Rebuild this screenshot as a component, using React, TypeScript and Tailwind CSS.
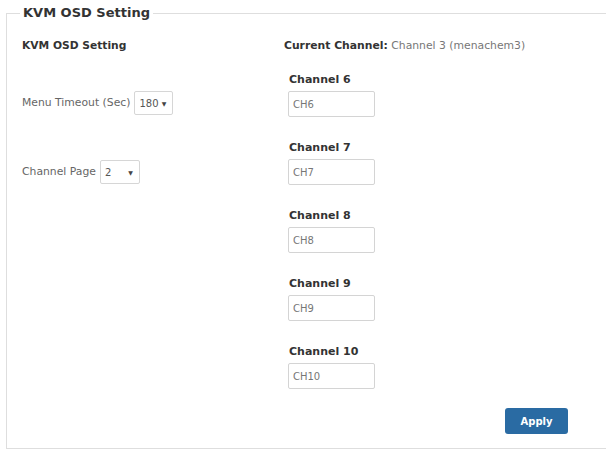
const channels = [
  { label: 'Channel 6', value: 'CH6' },
  { label: 'Channel 7', value: 'CH7' },
  { label: 'Channel 8', value: 'CH8' },
  { label: 'Channel 9', value: 'CH9' },
  { label: 'Channel 10', value: 'CH10' },
];

function SelectBox({ value, width }: { value: string; width: string }) {
  return (
    <div
      className={`flex items-center justify-between h-[24px] ${width} border border-[#d6d6d6] rounded-[2px] bg-white pl-[4px] pr-[6px] text-[10px] text-[#555]`}
    >
      <span>{value}</span>
      <span className="text-[6px] text-[#444]">▼</span>
    </div>
  );
}

export default function App() {
  return (
    <div className="w-[606px] h-[451px] bg-white font-['DejaVu_Sans',Verdana,sans-serif] text-[#333]">
      <fieldset className="ml-[6px] mt-[4px] h-[445px] border-l border-t border-b border-[#dedede] pl-[13px]">
        <legend className="px-[3px] text-[13px] font-bold text-[#333] leading-[18px]">
          KVM OSD Setting
        </legend>

        <div className="grid grid-cols-[262px_1fr] pt-[17px] pl-[2px]">
          {/* left column: general settings */}
          <div className="flex flex-col">
            <div className="text-[10.7px] font-bold leading-[14px] text-[#333]">KVM OSD Setting</div>
            <div className="flex items-center gap-[4px] mt-[38px]">
              <span className="text-[10.8px] text-[#666]">Menu Timeout (Sec)</span>
              <SelectBox value="180" width="w-[39px]" />
            </div>
            <div className="flex items-center gap-[4px] mt-[45px]">
              <span className="text-[10.8px] text-[#666]">Channel Page</span>
              <SelectBox value="2" width="w-[40px]" />
            </div>
          </div>

          {/* right column: channel names */}
          <div className="flex flex-col">
            <div className="text-[10.8px] leading-[14px] whitespace-nowrap">
              <span className="font-bold text-[#333]">Current Channel:</span>{' '}
              <span className="text-[#777]">Channel 3 (menachem3)</span>
            </div>
            <div className="flex flex-col gap-[24px] mt-[20px] pl-[4px]">
              {channels.map((ch) => (
                <div key={ch.label} className="flex flex-col">
                  <label className="text-[11px] font-bold leading-[14px] pl-[1px] text-[#333]">
                    {ch.label}
                  </label>
                  <input
                    defaultValue={ch.value}
                    className="mt-[4px] w-[87px] h-[26px] border border-[#d4d4d4] rounded-[2px] px-[4px] text-[10px] text-[#777] outline-none font-['DejaVu_Sans',sans-serif]"
                  />
                </div>
              ))}
            </div>
            <div className="flex justify-end pr-[38px] mt-[19px]">
              <button className="w-[63px] h-[26px] rounded-[3px] bg-[#2a6ba3] text-white text-[10px] font-bold">
                Apply
              </button>
            </div>
          </div>
        </div>
      </fieldset>
    </div>
  );
}
